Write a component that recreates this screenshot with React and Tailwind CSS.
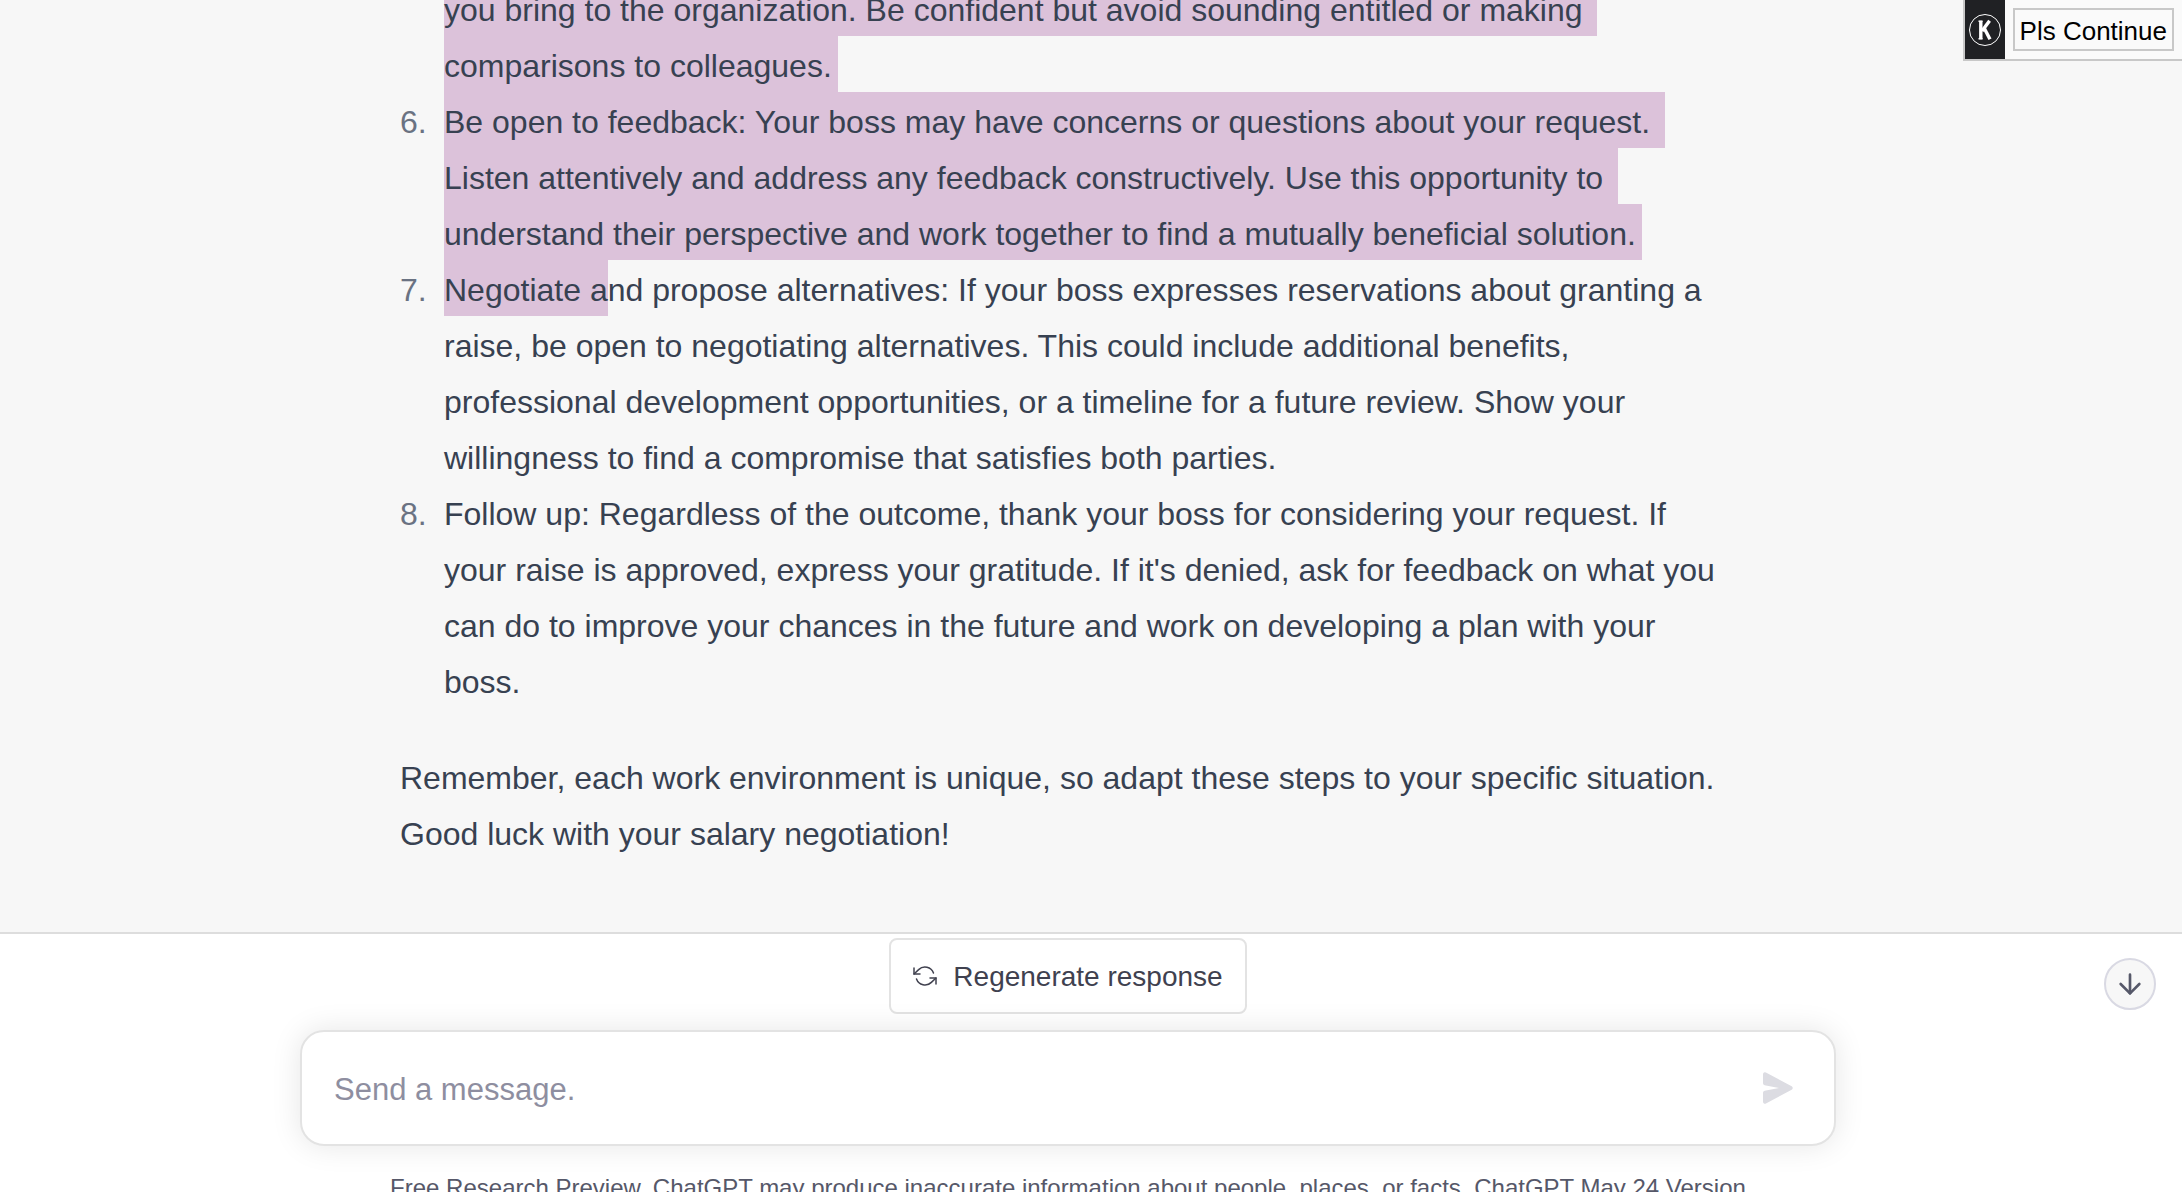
import { useState } from 'react'

const steps = [
  {
    num: 5,
    lines: [
      { marked: 'you bring to the organization. Be confident but avoid sounding entitled or making ' },
      { marked: 'comparisons to colleagues.' },
    ],
  },
  {
    num: 6,
    lines: [
      { marked: 'Be open to feedback: Your boss may have concerns or questions about your request. ' },
      { marked: 'Listen attentively and address any feedback constructively. Use this opportunity to ' },
      { marked: 'understand their perspective and work together to find a mutually beneficial solution.' },
    ],
  },
  {
    num: 7,
    lines: [
      { marked: 'Negotiate a', text: 'nd propose alternatives: If your boss expresses reservations about granting a' },
      { text: 'raise, be open to negotiating alternatives. This could include additional benefits,' },
      { text: 'professional development opportunities, or a timeline for a future review. Show your' },
      { text: 'willingness to find a compromise that satisfies both parties.' },
    ],
  },
  {
    num: 8,
    lines: [
      { text: 'Follow up: Regardless of the outcome, thank your boss for considering your request. If' },
      { text: "your raise is approved, express your gratitude. If it's denied, ask for feedback on what you" },
      { text: 'can do to improve your chances in the future and work on developing a plan with your' },
      { text: 'boss.' },
    ],
  },
]

export default function App() {
  return (
    <div className="relative flex h-screen flex-col overflow-hidden bg-white font-['Liberation_Sans',Arial,sans-serif]">
      <Conversation />
      <Composer />
      <SnippetBar />
    </div>
  )
}

function Conversation() {
  return (
    <main className="flex min-h-0 flex-1 flex-col justify-end overflow-hidden bg-[#f7f7f7] pr-[46px]">
      <div className="mx-auto w-full max-w-[1536px] pb-[70px] pl-[100px] text-[32px] leading-[56px] text-[#374151]">
        <ol className="mb-[42px] leading-[60px]">
          {steps.map((step) => (
            <li key={step.num} className="flex">
              <span className="h-14 w-11 shrink-0 text-gray-500">{step.num > 5 && `${step.num}.`}</span>
              <p className="whitespace-pre">
                {step.lines.map((line, i) => (
                  <Line key={i} marked={line.marked} text={line.text} />
                ))}
              </p>
            </li>
          ))}
        </ol>
        <p className="whitespace-nowrap">
          Remember, each work environment is unique, so adapt these steps to your specific situation.
          <br />
          Good luck with your salary negotiation!
        </p>
      </div>
    </main>
  )
}

function Line({ marked, text }) {
  return (
    <span className="flex h-14">
      {marked && (
        <mark className={`bg-[#dcc2da] text-inherit ${text ? '' : 'pr-1.5'}`}>{marked}</mark>
      )}
      {text}
    </span>
  )
}

function Composer() {
  const [message, setMessage] = useState('')

  return (
    <footer className="relative h-[260px] shrink-0 border-t-2 border-[#dddddd] bg-white pr-[46px]">
      <div className="mx-auto flex w-full max-w-[1536px] flex-col items-center pt-1">
        <button
          type="button"
          className="flex h-[76px] items-center gap-4 rounded-lg border-2 border-[#e3e3e3] bg-white px-[22px] text-[28px] text-[#40414f]"
        >
          <RefreshIcon />
          <span className="pt-0.5">Regenerate response</span>
        </button>

        <form
          onSubmit={(e) => e.preventDefault()}
          className="mt-4 flex h-[116px] w-full items-center rounded-3xl border-2 border-[#e3e3e3] bg-white pr-10 pl-8 shadow-[0_0_30px_rgba(0,0,0,0.1)]"
        >
          <input
            type="text"
            aria-label="Send a message."
            placeholder="Send a message."
            value={message}
            onChange={(e) => setMessage(e.target.value)}
            className="min-w-0 flex-1 pt-1 text-[31px] text-[#40414f] outline-none placeholder:text-[#8e8ea0]"
          />
          <button type="submit" aria-label="Send" className="text-[#dcdce2]">
            <SendIcon />
          </button>
        </form>

        <p className="mt-[26px] text-2xl leading-8 whitespace-nowrap text-[#565869]">
          Free Research Preview. ChatGPT may produce inaccurate information about people, places, or facts.{' '}
          <a href="#release-notes" className="underline underline-offset-4">ChatGPT May 24 Version</a>
        </p>
      </div>

      <button
        type="button"
        aria-label="Scroll to bottom"
        className="absolute top-6 right-[26px] flex size-[52px] items-center justify-center rounded-full border-2 border-[#d9d9e3] bg-[#f7f7f7] text-[#565869]"
      >
        <ArrowDownIcon />
      </button>
    </footer>
  )
}

// floating bar of saved snippets, pinned to the corner of the window
function SnippetBar() {
  return (
    <div className="absolute top-0 right-0 flex h-[61px] border-b-2 border-l-2 border-[#c8c8c8] bg-[#fafafa]">
      <div className="flex w-10 items-center justify-center bg-[#202124]">
        <KeyLogo />
      </div>
      <div className="px-2 pt-2">
        <button type="button" className="h-[43px] border-2 border-[#c8c8c8] px-[5px] pt-0.5 text-[26px] leading-[38px] text-black">
          Pls Continue
        </button>
      </div>
    </div>
  )
}

function KeyLogo() {
  return (
    <span className="flex size-8 items-center justify-center rounded-full border border-white text-white">
      <svg width="16" height="22" viewBox="0 0 16 22" fill="none" stroke="currentColor" strokeWidth="3.4" aria-hidden="true">
        <path d="M3.8 1.8v18.4" />
        <path d="M1.5 2.2h4M1.5 19.8h4" strokeWidth="1.4" />
        <path d="M12.6 1.8 5 12" />
        <path d="m7.4 9.5 5.6 10.7" />
      </svg>
    </span>
  )
}

function RefreshIcon() {
  return (
    <svg width="24" height="24" viewBox="0 0 24 24" fill="none" stroke="currentColor" strokeWidth="1.5" strokeLinecap="round" strokeLinejoin="round" aria-hidden="true">
      <polyline points="1 4 1 10 7 10" />
      <polyline points="23 20 23 14 17 14" />
      <path d="M20.49 9A9 9 0 0 0 5.64 5.64L1 10m22 4l-4.64 4.36A9 9 0 0 1 3.51 15" />
    </svg>
  )
}

function SendIcon() {
  return (
    <svg width="32" height="32" viewBox="0 0 16 16" fill="currentColor" aria-hidden="true">
      <path d="M.5 1.163A1 1 0 0 1 1.97.28l12.868 6.837a1 1 0 0 1 0 1.766L1.969 15.72A1 1 0 0 1 .5 14.836V10.33a1 1 0 0 1 .816-.983L8.5 8 1.316 6.653A1 1 0 0 1 .5 5.67V1.163Z" />
    </svg>
  )
}

function ArrowDownIcon() {
  return (
    <svg width="32" height="32" viewBox="0 0 24 24" fill="none" stroke="currentColor" strokeWidth="2" strokeLinecap="round" strokeLinejoin="round" aria-hidden="true">
      <line x1="12" y1="5" x2="12" y2="19" />
      <polyline points="19 12 12 19 5 12" />
    </svg>
  )
}
